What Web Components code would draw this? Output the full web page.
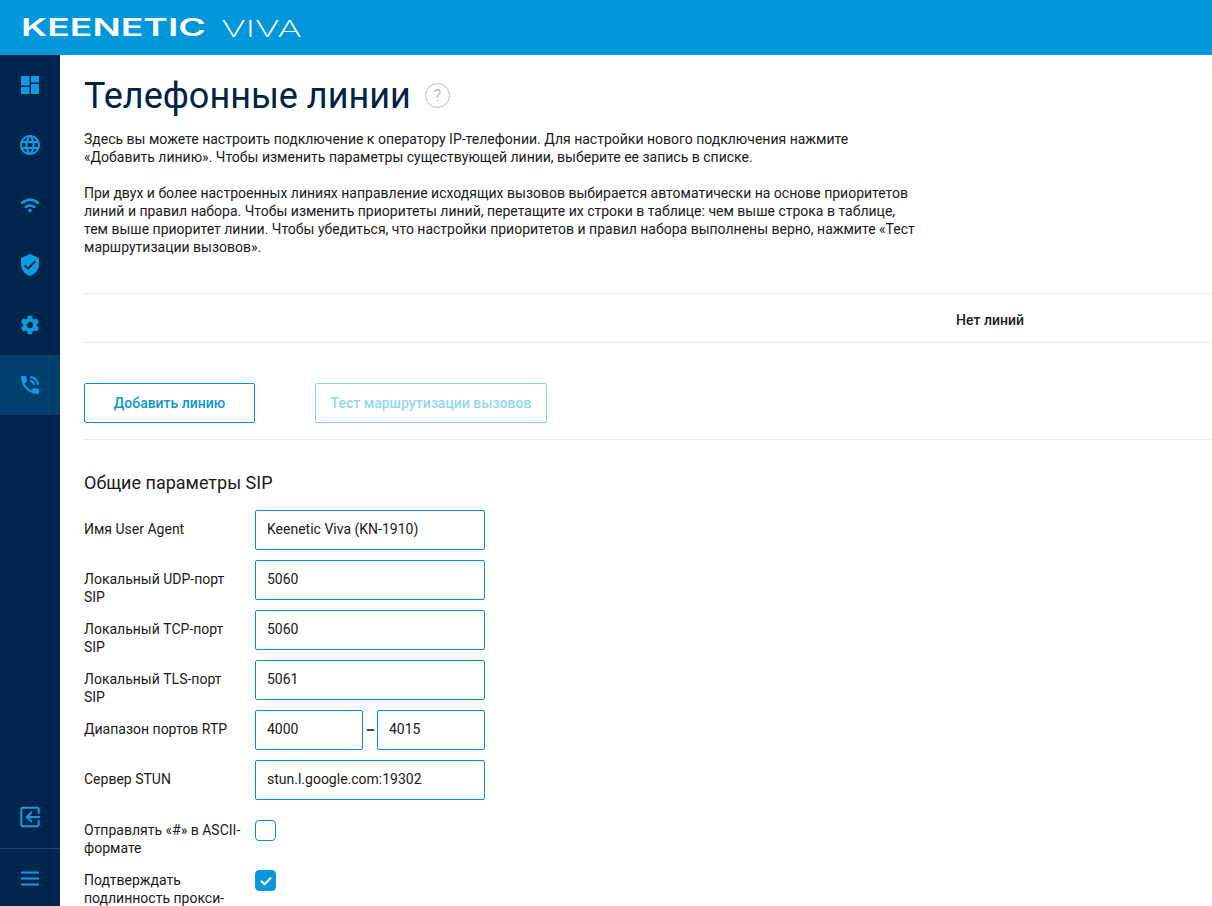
<!DOCTYPE html>
<html lang="ru">
<head>
<meta charset="utf-8">
<title>Телефонные линии</title>
<style>
  html, body { margin: 0; height: 100%; overflow: hidden; background: #fff; }
  body { font-family: Roboto, "Liberation Sans", sans-serif; font-size: 14px; line-height: 18px; color: #1a1a1a; }
</style>
</head>
<body>
<kn-app>
  <kn-header slot="header"></kn-header>
  <kn-sidebar slot="side">
    <kn-nav-item icon="dashboard"></kn-nav-item>
    <kn-nav-item icon="globe"></kn-nav-item>
    <kn-nav-item icon="wifi"></kn-nav-item>
    <kn-nav-item icon="shield"></kn-nav-item>
    <kn-nav-item icon="gear" size="22"></kn-nav-item>
    <kn-nav-item icon="phone" active></kn-nav-item>
  </kn-sidebar>
  <kn-page>
    <kn-title>Телефонные линии</kn-title>
    <kn-intro>
      <p>Здесь вы можете настроить подключение к оператору IP-телефонии. Для настройки нового подключения нажмите «Добавить линию». Чтобы изменить параметры существующей линии, выберите ее запись в списке.</p>
      <p>При двух и более настроенных линиях направление исходящих вызовов выбирается автоматически на основе приоритетов линий и правил набора. Чтобы изменить приоритеты линий, перетащите их строки в таблице: чем выше строка в таблице, тем выше приоритет линии. Чтобы убедиться, что настройки приоритетов и правил набора выполнены верно, нажмите «Тест маршрутизации вызовов».</p>
    </kn-intro>
    <kn-lines-table>Нет линий</kn-lines-table>
    <kn-actions>
      <kn-button style="width:171px">Добавить линию</kn-button>
      <kn-button style="width:232px" disabled>Тест маршрутизации вызовов</kn-button>
    </kn-actions>
    <kn-section heading="Общие параметры SIP">
      <kn-row label="Имя User Agent"><kn-field>Keenetic Viva (KN-1910)</kn-field></kn-row>
      <kn-row label="Локальный UDP-порт SIP"><kn-field>5060</kn-field></kn-row>
      <kn-row label="Локальный TCP-порт SIP"><kn-field>5060</kn-field></kn-row>
      <kn-row label="Локальный TLS-порт SIP"><kn-field>5061</kn-field></kn-row>
      <kn-row label="Диапазон портов RTP">
        <kn-range><kn-field>4000</kn-field><kn-field slot="to">4015</kn-field></kn-range>
      </kn-row>
      <kn-row label="Сервер STUN"><kn-field>stun.l.google.com:19302</kn-field></kn-row>
      <kn-row check label="Отправлять «#» в ASCII-формате"><kn-check></kn-check></kn-row>
      <kn-row check label="Подтверждать подлинность прокси-"><kn-check checked></kn-check></kn-row>
    </kn-section>
  </kn-page>
</kn-app>

<script>
const ICONS = {
  dashboard: '<path d="M3 12.5h8.5V3H3zM3 21h8.5v-7H3zM13 21h8V11h-8zM13 3v6.5h8V3z"/>',
  globe: '<path d="M11.99 2C6.47 2 2 6.48 2 12s4.47 10 9.99 10C17.52 22 22 17.52 22 12S17.52 2 11.99 2zm6.93 6h-2.95c-.32-1.25-.78-2.45-1.38-3.56 1.84.63 3.37 1.91 4.33 3.56zM12 4.04c.83 1.2 1.48 2.53 1.91 3.96h-3.82c.43-1.43 1.08-2.76 1.91-3.96zM4.26 14C4.1 13.36 4 12.69 4 12s.1-1.36.26-2h3.38c-.08.66-.14 1.32-.14 2 0 .68.06 1.34.14 2H4.26zm.82 2h2.95c.32 1.25.78 2.45 1.38 3.56-1.84-.63-3.37-1.9-4.33-3.56zm2.95-8H5.08c.96-1.66 2.49-2.93 4.33-3.56C8.81 5.55 8.35 6.75 8.03 8zM12 19.96c-.83-1.2-1.48-2.53-1.91-3.96h3.82c-.43 1.43-1.08 2.76-1.91 3.96zM14.34 14H9.66c-.09-.66-.16-1.32-.16-2 0-.68.07-1.35.16-2h4.68c.09.65.16 1.32.16 2 0 .68-.07 1.34-.16 2zm.25 5.56c.6-1.11 1.06-2.31 1.38-3.56h2.95c-.96 1.65-2.49 2.93-4.33 3.56zM16.36 14c.08-.66.14-1.32.14-2 0-.68-.06-1.34-.14-2h3.38c.16.64.26 1.31.26 2s-.1 1.36-.26 2h-3.38z"/>',
  wifi: '<g fill="none" stroke="currentColor" stroke-width="2.4" stroke-linecap="round"><path d="M4 10c4.8-4.3 11.2-4.3 16 0"/><path d="M7.6 14c2.6-2.2 6.2-2.2 8.8 0"/></g><circle cx="12" cy="17.6" r="1.8"/>',
  shield: '<path d="M12 1L3 5v6c0 5.55 3.84 10.74 9 12 5.16-1.26 9-6.45 9-12V5l-9-4zm-2 16l-4-4 1.41-1.41L10 14.17l6.59-6.59L18 9l-8 8z"/>',
  gear: '<path d="M19.43 12.98c.04-.32.07-.64.07-.98s-.03-.66-.07-.98l2.11-1.65c.19-.15.24-.42.12-.64l-2-3.46c-.12-.22-.39-.3-.61-.22l-2.49 1c-.52-.4-1.08-.73-1.69-.98l-.38-2.65C14.46 2.18 14.25 2 14 2h-4c-.25 0-.46.18-.49.42l-.38 2.65c-.61.25-1.17.59-1.69.98l-2.49-1c-.23-.09-.49 0-.61.22l-2 3.46c-.13.22-.07.49.12.64l2.11 1.65c-.04.32-.07.65-.07.98s.03.66.07.98l-2.11 1.65c-.19.15-.24.42-.12.64l2 3.46c.12.22.39.3.61.22l2.49-1c.52.4 1.08.73 1.69.98l.38 2.65c.03.24.24.42.49.42h4c.25 0 .46-.18.49-.42l.38-2.65c.61-.25 1.17-.59 1.69-.98l2.49 1c.23.09.49 0 .61-.22l2-3.46c.12-.22.07-.49-.12-.64l-2.11-1.65zM12 15.5c-1.93 0-3.5-1.57-3.5-3.5s1.57-3.5 3.5-3.5 3.5 1.57 3.5 3.5-1.57 3.5-3.5 3.5z"/>',
  phone: '<path d="M20 15.5c-1.25 0-2.45-.2-3.57-.57-.35-.11-.74-.03-1.02.24l-2.2 2.2c-2.83-1.44-5.15-3.75-6.59-6.59l2.2-2.21c.28-.26.36-.65.25-1C8.7 6.45 8.5 5.25 8.5 4c0-.55-.45-1-1-1H4c-.55 0-1 .45-1 1 0 9.39 7.61 17 17 17 .55 0 1-.45 1-1v-3.5c0-.55-.45-1-1-1zM19 12h2c0-4.97-4.03-9-9-9v2c3.87 0 7 3.13 7 7zm-4 0h2c0-2.76-2.24-5-5-5v2c1.66 0 3 1.34 3 3z"/>',
  exit: '<g fill="none" stroke="currentColor" stroke-width="2.2" stroke-linecap="round" stroke-linejoin="round"><path d="M21.5 8V3.5a1.5 1.5 0 0 0-1.5-1.5H4a1.5 1.5 0 0 0-1.5 1.5v17A1.5 1.5 0 0 0 4 22h16a1.5 1.5 0 0 0 1.5-1.5V16"/><path d="M22 12H9"/><path d="M13.5 7L8.5 12l5 5"/></g>',
  menu: '<path d="M3 5.6h18v2H3zM3 11.6h18v2H3zM3 17.6h18v2H3z"/>'
};

function iconSvg(name, size) {
  return `<svg width="${size}" height="${size}" viewBox="0 0 24 24" fill="currentColor">${ICONS[name]}</svg>`;
}

class KnApp extends HTMLElement {
  constructor() {
    super();
    this.attachShadow({ mode: 'open' }).innerHTML = `
      <style>
        :host { display: flex; flex-direction: column; height: 100vh; overflow: hidden; }
        .body { flex: 1; display: flex; min-height: 0; }
        main { flex: 1; min-width: 0; overflow: hidden; }
      </style>
      <slot name="header"></slot>
      <div class="body">
        <slot name="side"></slot>
        <main><slot></slot></main>
      </div>`;
  }
}

class KnHeader extends HTMLElement {
  constructor() {
    super();
    this.attachShadow({ mode: 'open' }).innerHTML = `
      <style>
        :host { display: flex; align-items: center; height: 55px; flex: none; padding-left: 21px; background: #0097da; color: #fff; }
        span { display: block; white-space: nowrap; transform-origin: left center; }
        .brand { width: 201px; font: 600 24px/24px Inter, sans-serif; transform: scaleX(1.555); }
        .model { font: 300 24px/24px Lato, sans-serif; transform: scaleX(1.47); letter-spacing: .5px; }
      </style>
      <span class="brand">KEENETIC</span>
      <span class="model">VIVA</span>`;
  }
}

class KnSidebar extends HTMLElement {
  constructor() {
    super();
    this.attachShadow({ mode: 'open' }).innerHTML = `
      <style>
        :host { display: flex; flex-direction: column; flex: none; width: 60px; background: #00264d; color: #0f9be0; }
        .spacer { flex: 1; }
        .foot { display: flex; align-items: center; justify-content: center; flex: none; }
        .exit { height: 60px; margin-bottom: 1px; }
        .menu { height: 57px; border-top: 1px solid #20446a; }
      </style>
      <slot></slot>
      <div class="spacer"></div>
      <div class="foot exit">${iconSvg('exit', 22)}</div>
      <div class="foot menu">${iconSvg('menu', 24)}</div>`;
  }
}

class KnNavItem extends HTMLElement {
  connectedCallback() {
    if (this.shadowRoot) return;
    this.attachShadow({ mode: 'open' }).innerHTML = `
      <style>
        :host { display: flex; align-items: center; justify-content: center; height: 60px; color: #0f9be0; }
        :host([active]) { background: #003f6e; }
        svg { display: block; }
      </style>
      ${iconSvg(this.getAttribute('icon'), this.getAttribute('size') || 24)}`;
  }
}

class KnPage extends HTMLElement {
  constructor() {
    super();
    this.attachShadow({ mode: 'open' }).innerHTML = `
      <style>
        :host { display: block; padding: 0 0 40px 24px; }
      </style>
      <slot></slot>`;
  }
}

class KnTitle extends HTMLElement {
  constructor() {
    super();
    this.attachShadow({ mode: 'open' }).innerHTML = `
      <style>
        :host { display: flex; align-items: center; gap: 14px; height: 75px; padding-top: 7px; box-sizing: border-box; }
        h1 { margin: 0; font: 400 36px/44px Roboto, sans-serif; color: #002245; }
        .help { display: flex; align-items: center; justify-content: center; width: 23px; height: 23px; margin-bottom: 2px; border: 1px solid #bdbdbd; border-radius: 50%; color: #a8a8a8; font: 300 17px/1 Roboto, sans-serif; }
      </style>
      <h1><slot></slot></h1>
      <span class="help">?</span>`;
  }
}

class KnIntro extends HTMLElement {
  constructor() {
    super();
    const root = this.attachShadow({ mode: 'open' });
    root.innerHTML = `
      <style>
        :host { display: block; width: 834px; }
        ::slotted(p) { margin: 0 0 18px; }
      </style>
      <slot></slot>`;
  }
}

class KnLinesTable extends HTMLElement {
  constructor() {
    super();
    this.attachShadow({ mode: 'open' }).innerHTML = `
      <style>
        :host { display: flex; align-items: center; justify-content: center; width: 1812px; height: 50px; box-sizing: border-box; margin-top: 37px; padding-top: 4px; border-top: 1px solid #ececec; border-bottom: 1px solid #ececec; font-weight: 500; }
      </style>
      <slot></slot>`;
  }
}

class KnActions extends HTMLElement {
  constructor() {
    super();
    this.attachShadow({ mode: 'open' }).innerHTML = `
      <style>
        :host { display: flex; gap: 60px; margin-top: 40px; padding-bottom: 16px; border-bottom: 1px solid #ececec; }
      </style>
      <slot></slot>`;
  }
}

class KnButton extends HTMLElement {
  constructor() {
    super();
    this.attachShadow({ mode: 'open' }).innerHTML = `
      <style>
        :host { display: flex; align-items: center; justify-content: center; height: 40px; box-sizing: border-box; border: 1px solid #0b90cc; border-radius: 2px; color: #0a96d2; font-weight: 500; }
        :host([disabled]) { border-color: #86d3ec; color: #93d8ee; }
      </style>
      <slot></slot>`;
  }
}

class KnSection extends HTMLElement {
  connectedCallback() {
    if (this.shadowRoot) return;
    this.attachShadow({ mode: 'open' }).innerHTML = `
      <style>
        :host { display: block; }
        h2 { margin: 0; padding-top: 32px; height: 38px; font: 400 18px/22px Roboto, sans-serif; color: #1a1a1a; }
      </style>
      <h2>${this.getAttribute('heading')}</h2>
      <slot></slot>`;
  }
}

class KnRow extends HTMLElement {
  connectedCallback() {
    if (this.shadowRoot) return;
    this.attachShadow({ mode: 'open' }).innerHTML = `
      <style>
        :host { display: grid; grid-template-columns: 171px 230px; min-height: 50px; }
        label { display: block; padding: 10px 12px 0 0; }
        :host([check]) label { padding-top: 11px; }
      </style>
      <label>${this.getAttribute('label')}</label>
      <div><slot></slot></div>`;
  }
}

class KnField extends HTMLElement {
  constructor() {
    super();
    this.attachShadow({ mode: 'open' }).innerHTML = `
      <style>
        :host { display: flex; align-items: center; height: 40px; box-sizing: border-box; padding: 0 11px 2px; border: 1px solid #0b90cc; border-radius: 2px; white-space: nowrap; }
      </style>
      <slot></slot>`;
  }
}

class KnRange extends HTMLElement {
  constructor() {
    super();
    this.attachShadow({ mode: 'open' }).innerHTML = `
      <style>
        :host { display: grid; grid-template-columns: 108px 14px 108px; align-items: center; }
        .dash { text-align: center; font-weight: 900; color: #444; }
      </style>
      <slot></slot><span class="dash">–</span><slot name="to"></slot>`;
  }
}

class KnCheck extends HTMLElement {
  connectedCallback() {
    if (this.shadowRoot) return;
    const mark = this.hasAttribute('checked')
      ? '<svg width="14" height="14" viewBox="0 0 14 14" fill="none" stroke="#fff" stroke-width="2" stroke-linecap="round" stroke-linejoin="round"><path d="M2.5 7.2l3 3 6-6"/></svg>'
      : '';
    this.attachShadow({ mode: 'open' }).innerHTML = `
      <style>
        :host { display: flex; align-items: center; justify-content: center; width: 21px; height: 21px; box-sizing: border-box; margin-top: 10px; border: 1px solid #0b90cc; border-radius: 4px; background: #fff; }
        :host([checked]) { background: #0b97dc; border-color: #0b97dc; }
      </style>
      ${mark}`;
  }
}

customElements.define('kn-app', KnApp);
customElements.define('kn-header', KnHeader);
customElements.define('kn-sidebar', KnSidebar);
customElements.define('kn-nav-item', KnNavItem);
customElements.define('kn-page', KnPage);
customElements.define('kn-title', KnTitle);
customElements.define('kn-intro', KnIntro);
customElements.define('kn-lines-table', KnLinesTable);
customElements.define('kn-actions', KnActions);
customElements.define('kn-button', KnButton);
customElements.define('kn-section', KnSection);
customElements.define('kn-row', KnRow);
customElements.define('kn-field', KnField);
customElements.define('kn-range', KnRange);
customElements.define('kn-check', KnCheck);
</script>
</body>
</html>
